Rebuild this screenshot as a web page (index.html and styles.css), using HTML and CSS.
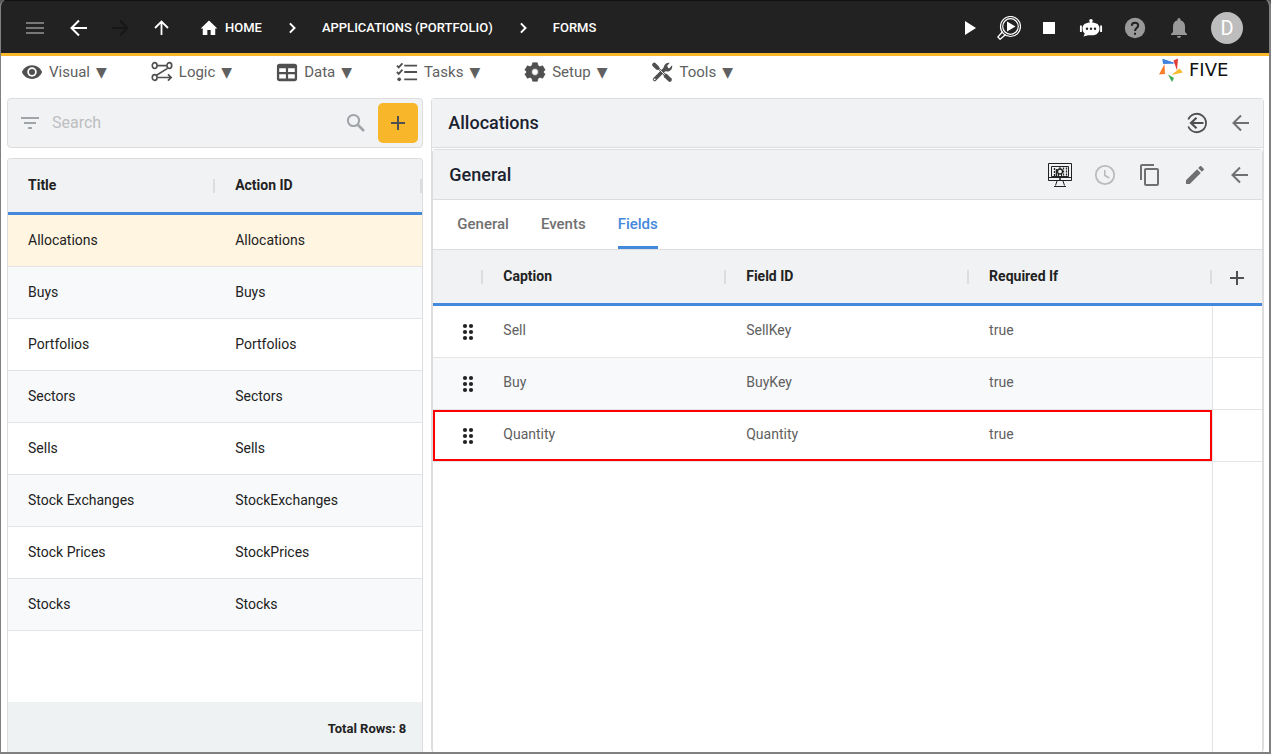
FILE: index.html
```
<!DOCTYPE html>
<html lang="en">
<head>
<meta charset="utf-8">
<title>Five - Forms</title>
<link rel="stylesheet" href="styles.css">
</head>
<body>
<svg class="defs" aria-hidden="true">
  <symbol id="arrow-left" viewBox="0 0 24 24"><path d="M20 12H5M12 4.500L4.500 12l7.500 7.500" fill="none" stroke="currentColor" stroke-width="2"/></symbol>
  <symbol id="plus" viewBox="0 0 24 24"><path d="M12 5v14M5 12h14" fill="none" stroke="currentColor" stroke-width="2"/></symbol>
  <symbol id="chevron" viewBox="0 0 24 24"><path d="M9.500 6.500L15 12l-5.500 5.500" fill="none" stroke="currentColor" stroke-width="2.400"/></symbol>
  <symbol id="drag" viewBox="0 0 24 24"><g fill="currentColor"><circle cx="9" cy="6" r="2.100"/><circle cx="15" cy="6" r="2.100"/><circle cx="9" cy="12" r="2.100"/><circle cx="15" cy="12" r="2.100"/><circle cx="9" cy="18" r="2.100"/><circle cx="15" cy="18" r="2.100"/></g></symbol>
</svg>
<div class="app">
  <header class="topbar">
    <div class="nav-buttons">
      <button class="icon-btn muted" aria-label="Menu"><svg viewBox="0 0 24 24"><path d="M3 7h18M3 12h18M3 17h18" stroke="currentColor" stroke-width="2"/></svg></button>
      <button class="icon-btn" aria-label="Back"><svg><use href="#arrow-left"/></svg></button>
      <button class="icon-btn faded" aria-label="Forward"><svg viewBox="0 0 24 24"><path d="M4 12h15M12 4.500l7.500 7.500-7.500 7.500" fill="none" stroke="currentColor" stroke-width="2"/></svg></button>
      <button class="icon-btn" aria-label="Up"><svg viewBox="0 0 24 24"><path d="M12.500 19V6M6 12l6.500-6.500L19 12" fill="none" stroke="currentColor" stroke-width="1.800"/></svg></button>
    </div>
    <nav class="crumbs" aria-label="Breadcrumb">
      <a href="#" class="crumb"><svg class="icon-20" viewBox="0 0 24 24"><path d="M10 20.500v-6h4v6h5.500v-8H22L12 3 2 12.500h2.500v8z" fill="currentColor"/></svg>HOME</a>
      <svg class="icon-20"><use href="#chevron"/></svg>
      <a href="#" class="crumb">APPLICATIONS (PORTFOLIO)</a>
      <svg class="icon-20"><use href="#chevron"/></svg>
      <a href="#" class="crumb">FORMS</a>
    </nav>
    <div class="actions">
      <div class="run-group">
        <button class="icon-btn" aria-label="Run"><svg viewBox="0 0 24 24"><path d="M8 5v14L19 12z" fill="currentColor"/></svg></button>
        <button class="icon-btn" aria-label="Debug"><svg viewBox="0 0 24 24"><g fill="none" stroke="currentColor"><circle cx="13.500" cy="10.500" r="10" stroke-width="1.200"/><circle cx="13.500" cy="10.500" r="7.800" stroke-width="1.200"/><path d="M5.500 15.800L.800 21l2.300 2.300 5.500-4.800" stroke-width="1.300"/></g><path d="M10 5.500v10l8.500-5z" fill="currentColor"/></svg></button>
        <button class="icon-btn" aria-label="Stop"><svg viewBox="0 0 24 24"><path d="M6 6h12v12H6z" fill="currentColor"/></svg></button>
      </div>
      <div class="info-group">
        <button class="icon-btn" aria-label="Assistant"><svg viewBox="0 0 24 24"><path d="M12 6.500c6 0 8.500 2.200 8.500 6s-2.500 6.800-7.500 6.800H9L4.500 20.500 5.800 17.500C4.200 16.500 3.500 14.800 3.500 12.500c0-3.800 2.500-6 8.500-6z" fill="currentColor"/><path d="M12 7V4M1.900 9.500v6.500M22.100 9.500v6.500" stroke="currentColor" stroke-width="1.900"/><circle cx="12" cy="4.800" r="1.800" fill="currentColor"/><g fill="#222"><circle cx="8" cy="12.800" r="1.200"/><circle cx="12" cy="12.800" r="1.200"/><circle cx="16" cy="12.800" r="1.200"/></g></svg></button>
        <button class="icon-btn gray" aria-label="Help"><svg viewBox="0 0 24 24"><circle cx="12" cy="12" r="10.200" fill="currentColor"/><path d="M8.800 9.700c0-4 6.400-4 6.400-.200 0 2.500-3.200 2.700-3.200 5.500" fill="none" stroke="#222" stroke-width="2"/><path d="M11 16.800h2v2h-2z" fill="#222"/></svg></button>
        <button class="icon-btn gray" aria-label="Notifications"><svg viewBox="0 0 24 24"><path d="M12 22c1.100 0 2-.900 2-2h-4c0 1.100.900 2 2 2zM18 16v-5.500c0-3.200-1.600-5.600-4.500-6.300v-.700a1.500 1.500 0 0 0-3 0v.700C7.600 4.900 6 7.300 6 10.500V16l-2 2v1h16v-1z" fill="currentColor"/></svg></button>
      </div>
      <button class="avatar" aria-label="Account">D</button>
    </div>
  </header>

  <div class="menubar">
    <nav class="menus" aria-label="Main">
      <button class="menu"><svg viewBox="0 0 24 24"><path d="M12 4.500C6.500 4.500 2.700 7.800 1 12c1.700 4.200 5.500 7.500 11 7.500S21.300 16.200 23 12c-1.700-4.200-5.500-7.500-11-7.500z" fill="currentColor"/><circle cx="12" cy="12" r="5.200" fill="#fff"/><circle cx="12" cy="12" r="3.300" fill="currentColor"/></svg>Visual <span>▼</span></button>
      <button class="menu"><svg viewBox="0 0 24 24"><g fill="none" stroke="currentColor" stroke-width="1.800"><ellipse cx="4" cy="5" rx="2.600" ry="3.200"/><ellipse cx="20" cy="5" rx="2.600" ry="3.200"/><ellipse cx="4" cy="18" rx="2.600" ry="3.200"/><path d="M7 5h10M18 8L6 15.500M7 18h15M18.500 14.500L22 18l-3.500 3.500"/></g></svg>Logic <span>▼</span></button>
      <button class="menu"><svg viewBox="0 0 24 24"><path fill-rule="evenodd" d="M4 3h16a3 3 0 0 1 3 3v13a3 3 0 0 1-3 3H4a3 3 0 0 1-3-3V6a3 3 0 0 1 3-3zM3.500 8v4h7.300V8zm9.700 0v4h7.300V8zM3.500 14.500v4.500h7.300v-4.500zm9.700 0v4.500h7.300v-4.500z" fill="currentColor"/></svg>Data <span>▼</span></button>
      <button class="menu"><svg viewBox="0 0 24 24"><g fill="none" stroke="currentColor" stroke-width="2"><path d="M9 5h14M9 12h14M9 20h14M1 5l2 2 4-4.500M1 12l2 2 4-4.500"/></g><circle cx="3.500" cy="20" r="2" fill="currentColor"/></svg>Tasks <span>▼</span></button>
      <button class="menu"><svg viewBox="0 0 24 24"><path fill-rule="evenodd" d="M9.500 2h5l.800 3 2 1.200 3-.900L23 9.800 20.700 12l2.300 2.200-2.700 4.500-3-.900-2 1.200-.800 3h-5l-.800-3-2-1.200-3 .900L1 14.200 3.300 12 1 9.800l2.700-4.500 3 .900 2-1.200zM12 8.300a3.700 3.700 0 1 0 0 7.400 3.700 3.700 0 0 0 0-7.400z" fill="currentColor" stroke="currentColor" stroke-width=".8" stroke-linejoin="round"/></svg>Setup <span>▼</span></button>
      <button class="menu"><svg viewBox="0 0 24 24"><g fill="none" stroke="currentColor" stroke-linecap="round"><path d="M3.500 4l3.500 3.500" stroke-width="4.500"/><path d="M7 7l8 8" stroke-width="2"/><path d="M16 16l4.500 4.500" stroke-width="4.500"/><path d="M4 20l12.500-12.500" stroke-width="4"/></g><path d="M14 9c-1-4.500 3-8 6.500-7l-3 3.500.500 2 2 .500L23 4.500c1 4.500-3 8-7.500 6.500z" fill="currentColor"/><path d="M9 9l6 6" stroke="#fff" stroke-width="1"/><circle cx="4" cy="20" r="1" fill="#fff"/></svg>Tools <span>▼</span></button>
    </nav>
    <div class="brand">
      <svg viewBox="0 0 24 24"><path d="M3.500 1l14 4.500-13.500-.500z" fill="#3f83dc"/><path d="M4 1.500l10 3.500-9.500.500z" fill="#3f83dc" stroke="#3f83dc"/><path d="M14.500 2.500L19 .500 18 12.500z" fill="#e63a36"/><path d="M20.500 10.500L24 14.500 12.500 17z" fill="#f8bb2c"/><path d="M9 16.500l6 3.500-2 4z" fill="#3bab54"/><path d="M5.500 6l.500 10-6 .500z" fill="#fb7d27"/></svg>
      <span>FIVE</span>
    </div>
  </div>

  <main class="workspace">
    <section class="sidebar">
      <div class="search card">
        <svg class="icon-24" viewBox="0 0 24 24"><path d="M3 7h18M6 12h12M10 17h4" stroke="currentColor" stroke-width="2"/></svg>
        <input type="search" aria-label="Search" placeholder="Search">
        <svg class="icon-24" viewBox="0 0 24 24"><circle cx="9.500" cy="9.500" r="5.600" fill="none" stroke="currentColor" stroke-width="2"/><path d="M14 14l6 6" stroke="currentColor" stroke-width="2.600"/></svg>
        <button class="add" aria-label="Add"><svg class="icon-24"><use href="#plus"/></svg></button>
      </div>
      <div class="list card">
        <table class="grid">
          <thead><tr><th scope="col">Title</th><th scope="col">Action ID</th></tr></thead>
          <tbody>
            <tr class="selected"><td>Allocations</td><td>Allocations</td></tr>
            <tr><td>Buys</td><td>Buys</td></tr>
            <tr><td>Portfolios</td><td>Portfolios</td></tr>
            <tr><td>Sectors</td><td>Sectors</td></tr>
            <tr><td>Sells</td><td>Sells</td></tr>
            <tr><td>Stock Exchanges</td><td>StockExchanges</td></tr>
            <tr><td>Stock Prices</td><td>StockPrices</td></tr>
            <tr><td>Stocks</td><td>Stocks</td></tr>
          </tbody>
        </table>
        <footer class="total">Total Rows: 8</footer>
      </div>
    </section>

    <section class="detail card">
      <header class="bar">
        <h1>Allocations</h1>
        <div class="tools">
          <button class="icon-btn dark" aria-label="Return to list"><svg viewBox="0 0 24 24"><g fill="none" stroke="currentColor" stroke-width="1.800"><path d="M3.300 8.500A9.200 9.200 0 1 1 3.300 15.500"/><path d="M18.500 12H6M11.500 6.800L6 12l5.500 5.200" stroke-width="2.200"/></g></svg></button>
          <button class="icon-btn" aria-label="Back"><svg><use href="#arrow-left"/></svg></button>
        </div>
      </header>
      <div class="inner">
        <header class="bar">
          <h2>General</h2>
          <div class="tools">
            <button class="icon-btn black" aria-label="Preview form"><svg viewBox="0 0 24 24"><g fill="none" stroke="currentColor"><path d="M.500.500h23v17H.500zM3.500 3.500h17v10h-17zM.500 14.500h23M9 18l-1.500 4.500M15 18l1.500 4.500M6 23.500h12"/><path d="M6.500 5v8M15.500 4.500v8M18.500 4.500v8" stroke-width="1.300" stroke-dasharray="2 1"/><path d="M8.500 6v7" stroke-width="1.500"/><circle cx="12" cy="8.500" r="2.500" stroke-width="1.300"/><path d="M12 4v2M10.500 11v2.500M13.500 11v2.500"/></g><circle cx="12" cy="16" r="1" fill="currentColor"/></svg></button>
            <button class="icon-btn disabled" aria-label="History"><svg viewBox="0 0 24 24"><circle cx="12" cy="12" r="9.200" fill="none" stroke="currentColor" stroke-width="1.800"/><path d="M11.800 7v5.500l4.500 2.500" fill="none" stroke="currentColor" stroke-width="1.600"/></svg></button>
            <button class="icon-btn" aria-label="Copy"><svg viewBox="0 0 24 24"><path d="M16 1H4c-1.100 0-2 .900-2 2v14h2V3h12V1zm3 4H8c-1.100 0-2 .900-2 2v14c0 1.100.900 2 2 2h11c1.100 0 2-.900 2-2V7c0-1.100-.900-2-2-2zm0 16H8V7h11v14z" fill="currentColor"/></svg></button>
            <button class="icon-btn" aria-label="Edit"><svg viewBox="0 0 24 24"><path d="M3 17.250V21h3.750L17.810 9.940l-3.750-3.750zM20.710 7.040a1 1 0 0 0 0-1.410l-2.340-2.340a1 1 0 0 0-1.410 0l-1.830 1.830 3.750 3.750z" fill="currentColor"/></svg></button>
            <button class="icon-btn" aria-label="Close"><svg><use href="#arrow-left"/></svg></button>
          </div>
        </header>
        <div class="tabs" role="tablist">
          <button class="tab" role="tab">General</button>
          <button class="tab" role="tab">Events</button>
          <button class="tab active" role="tab" aria-selected="true">Fields</button>
        </div>
        <div class="fields">
          <table class="grid">
            <colgroup><col class="handle"><col><col><col><col class="extra"></colgroup>
            <thead><tr><th aria-label="Reorder"></th><th scope="col">Caption</th><th scope="col">Field ID</th><th scope="col">Required If</th><th class="end"><button class="icon-btn dark" aria-label="Add field"><svg><use href="#plus"/></svg></button></th></tr></thead>
            <tbody>
              <tr><td class="grip"><svg class="icon-24"><use href="#drag"/></svg></td><td>Sell</td><td>SellKey</td><td>true</td><td class="end"></td></tr>
              <tr><td class="grip"><svg class="icon-24"><use href="#drag"/></svg></td><td>Buy</td><td>BuyKey</td><td>true</td><td class="end"></td></tr>
              <tr class="marked"><td class="grip"><svg class="icon-24"><use href="#drag"/></svg></td><td>Quantity</td><td>Quantity</td><td>true</td><td class="end"></td></tr>
            </tbody>
          </table>
          <div class="filler"></div>
        </div>
      </div>
    </section>
  </main>
</div>
</body>
</html>
```
FILE: styles.css
```
* { box-sizing: border-box; }
body {
  margin: 0;
  background: #555;
  color: #222;
  font: 14px/20px Roboto, "Liberation Sans", sans-serif;
}
button {
  margin: 0;
  padding: 0;
  border: 0;
  background: none;
  color: inherit;
  font: inherit;
}
svg { display: block; flex: none; }
.defs { position: absolute; width: 0; height: 0; }
.icon-20 { width: 20px; height: 20px; }
.icon-24, .icon-btn svg { width: 24px; height: 24px; }
.icon-btn { display: block; }

.app {
  display: flex;
  flex-direction: column;
  height: 100vh;
  border: solid #808080;
  border-width: 0 2px 2px 1px;
  border-radius: 6px 6px 0 0;
  background: #fff;
  overflow: hidden;
}

.topbar {
  display: flex;
  align-items: center;
  height: 56px;
  flex: none;
  padding: 2px 26px 0 22px;
  border-top: 1px solid #111;
  border-bottom: 3px solid #f8b62b;
  background: #222;
  color: #fff;
}
.nav-buttons { display: flex; gap: 17px; }
.nav-buttons .icon-btn:first-child { margin-right: 3px; }
.muted { color: #777; }
.faded { color: #161616; }
.gray { color: #999; }
.crumbs {
  display: flex;
  align-items: center;
  gap: 20px;
  margin-left: 26px;
  font-size: 13px;
  font-weight: 500;
}
.crumb {
  display: flex;
  align-items: center;
  gap: 6px;
  color: #fff;
  text-decoration: none;
}
.actions { display: flex; align-items: center; gap: 18px; margin-left: auto; }
.run-group { display: flex; gap: 16px; }
.info-group { display: flex; gap: 20px; margin-right: 2px; }
.avatar {
  width: 32px;
  height: 32px;
  border-radius: 50%;
  background: #bdbdbd;
  font-size: 20px;
  color: #fff;
}

.menubar {
  display: flex;
  align-items: flex-start;
  justify-content: space-between;
  height: 42px;
  flex: none;
  padding: 0 22px 0 20px;
}
.menus { display: flex; gap: 44px; padding-top: 5px; }
.menu {
  display: flex;
  align-items: center;
  gap: 6px;
  font-size: 15px;
  color: #606060;
}
.menu svg { width: 22px; height: 22px; color: #505050; }
.menu span { font-family: "DejaVu Sans", sans-serif; font-size: 14px; }
.brand {
  display: flex;
  align-items: center;
  gap: 6px;
  width: 88px;
  padding-top: 2px;
  color: #111;
  font: 18px/24px "DejaVu Sans", sans-serif;
}
.brand svg { width: 24px; height: 24px; }

.workspace {
  display: grid;
  grid-template-columns: 1fr 2fr;
  gap: 8px;
  flex: 1;
  min-height: 0;
  padding: 0 5px 0 6px;
}
.card { border: 1px solid #ddd; border-radius: 4px; }
.sidebar { display: flex; flex-direction: column; gap: 10px; min-height: 0; }
.search {
  display: flex;
  align-items: center;
  gap: 10px;
  height: 50px;
  flex: none;
  padding: 0 4px 0 10px;
  background: #f1f2f4;
  color: #a0a4a8;
}
.search input {
  flex: 1;
  min-width: 0;
  padding: 0;
  border: 0;
  outline: 0;
  background: none;
  font: 16px/20px Roboto, sans-serif;
  color: #222;
}
.search input::placeholder { color: #bcbec0; opacity: 1; }
.add {
  display: grid;
  place-items: center;
  width: 40px;
  height: 40px;
  border-radius: 5px;
  background: #f8b62b;
  color: #505050;
}
.list {
  display: flex;
  flex-direction: column;
  flex: 1;
  min-height: 0;
  border-bottom: 0;
  border-radius: 4px 4px 0 0;
  overflow: hidden;
}
.total {
  margin-top: auto;
  padding: 17px 16px 13px;
  background: #eef2f3;
  font-size: 13px;
  font-weight: 700;
  text-align: right;
}

.grid { width: 100%; border-spacing: 0; table-layout: fixed; }
.grid th {
  height: 56px;
  padding: 0 20px 2px;
  border-bottom: 3px solid #4489db;
  background: linear-gradient(#ddd, #ddd) right 20px / 2px 14px no-repeat #f1f2f4;
  font-weight: 700;
  text-align: left;
}
.grid td {
  height: 52px;
  padding: 0 20px 2px;
  border-bottom: 1px solid #e2e4e6;
}
.grid tr:nth-child(even) td { background: #f8f9fb; }
.grid .selected td { background: #fff5e1; }

.detail {
  display: flex;
  flex-direction: column;
  min-width: 0;
  min-height: 0;
  border-bottom: 0;
}
.bar {
  display: flex;
  align-items: center;
  justify-content: space-between;
  height: 49px;
  flex: none;
  padding: 0 10px 0 16px;
  border-bottom: 1px solid #ddd;
  background: #f1f2f4;
}
.bar h1, .bar h2 {
  margin: 0;
  font-size: 18px;
  font-weight: 500;
  line-height: 24px;
  color: #1b2230;
}
.tools { display: flex; gap: 20px; color: #707070; }
.inner .tools { gap: 21px; }
.dark { color: #505050; }
.black { color: #222; }
.disabled { color: #bbb; }
.inner {
  display: flex;
  flex-direction: column;
  flex: 1;
  min-height: 0;
  margin-top: 1px;
  border: solid #ddd;
  border-width: 1px 1px 0;
  border-radius: 4px 4px 0 0;
}
.inner .bar { height: 50px; }
.tabs {
  display: flex;
  gap: 32px;
  height: 50px;
  flex: none;
  padding: 0 24px;
  border-bottom: 1px solid #ddd;
  font-size: 15px;
  font-weight: 500;
  color: #707070;
}
.tab { padding-top: 2px; border-bottom: 3px solid transparent; }
.tab.active { border-color: #4489db; color: #4489db; }
.fields { display: flex; flex-direction: column; flex: 1; min-height: 0; }
.fields .handle { width: 50px; }
.fields .extra { width: 50px; }
.fields td { padding-bottom: 4px; color: #606060; }
.fields .grip { padding: 0 0 0 23px; color: #222; }
.fields .end { padding: 2px 0 0 13px; }
.fields th.end { background: #f1f2f4; }
.fields tr td.end { border-left: 1px solid #e2e4e6; background: #fff; }
.fields .marked td { box-shadow: inset 0 2px #f00, inset 0 -2px #f00; }
.fields .marked td:first-child { box-shadow: inset 0 2px #f00, inset 0 -2px #f00, inset 2px 0 #f00; }
.fields .marked td:nth-child(4) { box-shadow: inset 0 2px #f00, inset 0 -2px #f00, inset -2px 0 #f00; }
.fields .marked td.end { box-shadow: none; }
.filler { flex: 1; margin-right: 49px; border-right: 1px solid #e2e4e6; }
```
